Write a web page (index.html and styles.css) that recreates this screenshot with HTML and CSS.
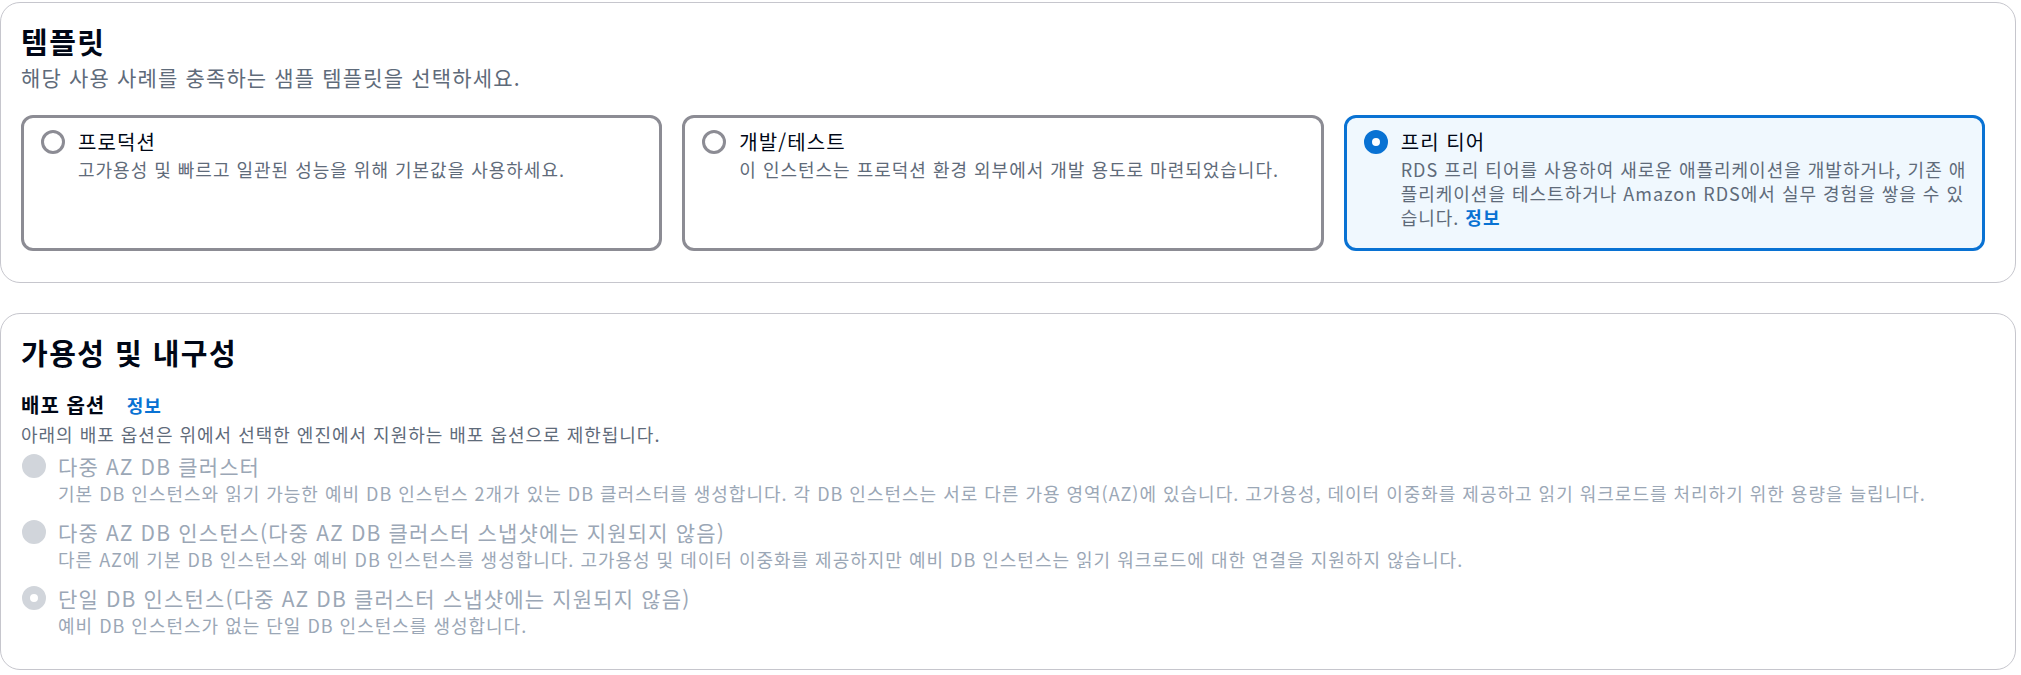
FILE: index.html
```html
<!DOCTYPE html>
<html lang="ko">
<head>
    <meta charset="UTF-8">
    <meta name="viewport" content="width=device-width, initial-scale=1.0">
    <title>데이터베이스 생성</title>
    <link rel="stylesheet" href="styles.css">
</head>
<body>
    <div class="page">
        <!-- 템플릿 -->
        <section class="panel">
            <h2 class="panel-title">템플릿</h2>
            <p class="panel-desc">해당 사용 사례를 충족하는 샘플 템플릿을 선택하세요.</p>

            <div class="tiles">
                <div class="tile">
                    <span class="radio"></span>
                    <div class="tile-body">
                        <div class="tile-label">프로덕션</div>
                        <div class="tile-desc">고가용성 및 빠르고 일관된 성능을 위해 기본값을 사용하세요.</div>
                    </div>
                </div>

                <div class="tile">
                    <span class="radio"></span>
                    <div class="tile-body">
                        <div class="tile-label">개발/테스트</div>
                        <div class="tile-desc">이 인스턴스는 프로덕션 환경 외부에서 개발 용도로 마련되었습니다.</div>
                    </div>
                </div>

                <div class="tile selected">
                    <span class="radio checked"></span>
                    <div class="tile-body">
                        <div class="tile-label">프리 티어</div>
                        <div class="tile-desc">RDS 프리 티어를 사용하여 새로운 애플리케이션을 개발하거나, 기존 애플리케이션을 테스트하거나 Amazon RDS에서 실무 경험을 쌓을 수 있습니다. <a class="info" href="#">정보</a></div>
                    </div>
                </div>
            </div>
        </section>

        <!-- 가용성 및 내구성 -->
        <section class="panel">
            <h2 class="panel-title">가용성 및 내구성</h2>

            <div class="field-label">배포 옵션 <a class="info" href="#">정보</a></div>
            <p class="field-desc">아래의 배포 옵션은 위에서 선택한 엔진에서 지원하는 배포 옵션으로 제한됩니다.</p>

            <div class="options">
                <div class="option disabled">
                    <span class="radio"></span>
                    <div>
                        <div class="option-label">다중 AZ DB 클러스터</div>
                        <div class="option-desc">기본 DB 인스턴스와 읽기 가능한 예비 DB 인스턴스 2개가 있는 DB 클러스터를 생성합니다. 각 DB 인스턴스는 서로 다른 가용 영역(AZ)에 있습니다. 고가용성, 데이터 이중화를 제공하고 읽기 워크로드를 처리하기 위한 용량을 늘립니다.</div>
                    </div>
                </div>

                <div class="option disabled">
                    <span class="radio"></span>
                    <div>
                        <div class="option-label">다중 AZ DB 인스턴스(다중 AZ DB 클러스터 스냅샷에는 지원되지 않음)</div>
                        <div class="option-desc">다른 AZ에 기본 DB 인스턴스와 예비 DB 인스턴스를 생성합니다. 고가용성 및 데이터 이중화를 제공하지만 예비 DB 인스턴스는 읽기 워크로드에 대한 연결을 지원하지 않습니다.</div>
                    </div>
                </div>

                <div class="option disabled">
                    <span class="radio checked"></span>
                    <div>
                        <div class="option-label">단일 DB 인스턴스(다중 AZ DB 클러스터 스냅샷에는 지원되지 않음)</div>
                        <div class="option-desc">예비 DB 인스턴스가 없는 단일 DB 인스턴스를 생성합니다.</div>
                    </div>
                </div>
            </div>
        </section>
    </div>
</body>
</html>
```

FILE: styles.css
```css
* {
    margin: 0;
    padding: 0;
    box-sizing: border-box;
}

html, body {
    width: 100%;
    height: 100%;
    overflow: hidden;
    background-color: #ffffff;
    font-family: "Noto Sans CJK KR", sans-serif;
    color: #000716;
}

.page {
    padding: 2px 5px 0 0;
}

/* 컨테이너 */
.panel {
    border: 1px solid #c6c6cd;
    border-radius: 20px;
    padding: 20px 30px 31px 20px;
}

.panel + .panel {
    margin-top: 30px;
    padding-bottom: 32px;
}

.panel-title {
    font-size: 29px;
    line-height: 36px;
    font-weight: 700;
    letter-spacing: 0.05em;
}

.panel-desc {
    margin-top: 3px;
    font-size: 21px;
    line-height: 30px;
    letter-spacing: 0.055em;
    color: #5f6b7a;
}

.info {
    color: #0972d3;
    font-weight: 700;
    text-decoration: none;
}

/* 라디오 */
.radio {
    flex: none;
    width: 24px;
    height: 24px;
    margin-top: 3px;
    border-radius: 50%;
    border: 3px solid #8c8c94;
    background-color: #ffffff;
}

.radio.checked {
    border: 8px solid #0972d3;
}

/* 템플릿 타일 */
.tiles {
    margin-top: 23px;
    display: grid;
    grid-template-columns: repeat(3, 1fr);
    gap: 20px;
}

.tile {
    display: flex;
    gap: 13px;
    border: 3px solid #8c8c94;
    border-radius: 12px;
    padding: 9px 15px 19px 17px;
    min-height: 136px;
}

.tile.selected {
    border-color: #0972d3;
    background-color: #f0f8fe;
}

.tile-label {
    font-size: 20px;
    line-height: 30px;
    letter-spacing: 0.055em;
}

.tile-desc {
    font-size: 18px;
    line-height: 24px;
    letter-spacing: 0.055em;
    color: #5f6b7a;
}

/* 배포 옵션 */
.field-label {
    margin-top: 21px;
    font-size: 20px;
    line-height: 27px;
    font-weight: 700;
    letter-spacing: 0.05em;
}

.field-label .info {
    margin-left: 15px;
    font-size: 18px;
}

.field-desc {
    margin-top: 3px;
    font-size: 18px;
    line-height: 24px;
    letter-spacing: 0.055em;
    color: #5f6b7a;
}

.options {
    margin-top: 5px;
    display: flex;
    flex-direction: column;
    gap: 12px;
}

.option {
    display: flex;
    gap: 12px;
    padding-left: 1px;
}

.option-label {
    font-size: 21px;
    line-height: 30px;
    letter-spacing: 0.055em;
}

.option-desc {
    font-size: 18px;
    line-height: 24px;
    letter-spacing: 0.055em;
}

.option.disabled .option-label,
.option.disabled .option-desc {
    color: #9ba7b6;
}

.option.disabled .radio {
    border-color: #d1d5db;
    background-color: #d1d5db;
}

.option.disabled .radio.checked {
    border-width: 8px;
    background-color: #ffffff;
}
```
